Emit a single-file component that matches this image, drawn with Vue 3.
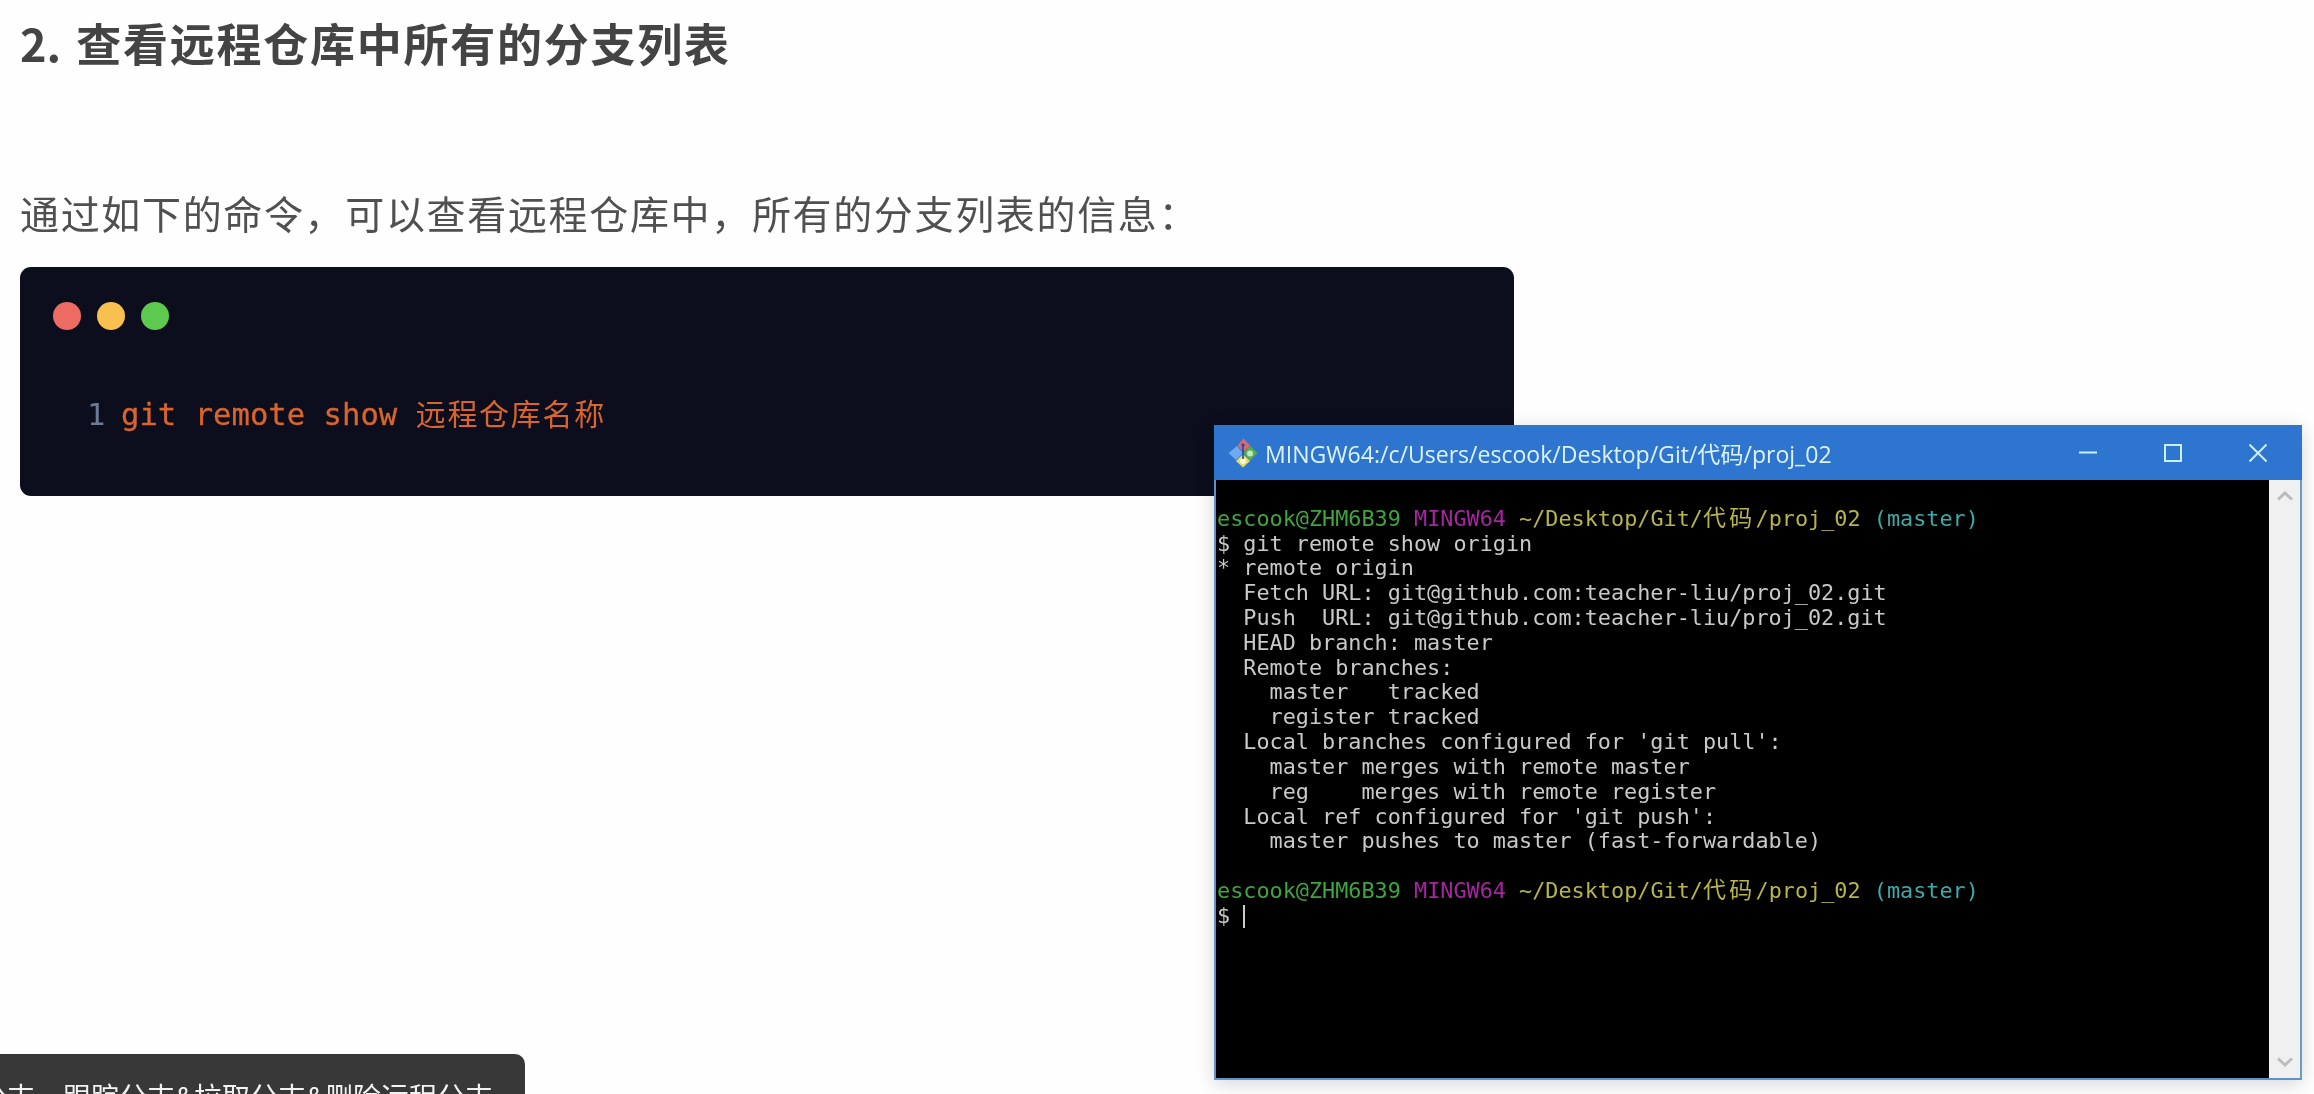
<script setup>
const rows = [
  [['g', 'escook@ZHM6B39'], ['w', ' '], ['m', 'MINGW64'], ['w', ' '], ['y', '~/Desktop/Git/'], ['yc', '代码'], ['y', '/proj_02'], ['w', ' '], ['c', '(master)']],
  [['w', '$ git remote show origin']],
  [['w', '* remote origin']],
  [['w', '  Fetch URL: git@github.com:teacher-liu/proj_02.git']],
  [['w', '  Push  URL: git@github.com:teacher-liu/proj_02.git']],
  [['w', '  HEAD branch: master']],
  [['w', '  Remote branches:']],
  [['w', '    master   tracked']],
  [['w', '    register tracked']],
  [['w', "  Local branches configured for 'git pull':"]],
  [['w', '    master merges with remote master']],
  [['w', '    reg    merges with remote register']],
  [['w', "  Local ref configured for 'git push':"]],
  [['w', '    master pushes to master (fast-forwardable)']],
  [['w', ' ']],
  [['g', 'escook@ZHM6B39'], ['w', ' '], ['m', 'MINGW64'], ['w', ' '], ['y', '~/Desktop/Git/'], ['yc', '代码'], ['y', '/proj_02'], ['w', ' '], ['c', '(master)']],
  [['w', '$ '], ['cursor', '']],
]
</script>

<template>
  <div class="page">
    <h2 class="heading"><span class="latin">2.</span> 查看远程仓库中所有的分支列表</h2>
    <p class="intro">通过如下的命令，可以查看远程仓库中，所有的分支列表的信息：</p>
    <div class="code">
      <div class="dots">
        <span class="dot red"></span>
        <span class="dot yellow"></span>
        <span class="dot green"></span>
      </div>
      <div class="code-line">
        <span class="num">1</span>
        <span class="cmd">git remote show <span class="cmd-cjk">远程仓库名称</span></span>
      </div>
    </div>

    <section class="window">
      <header class="titlebar">
        <svg class="logo" viewBox="0 0 30 30" aria-hidden="true">
          <path d="M15.5 0.5 L22 7.5 L15.5 14 L9.5 7.5 Z" fill="#d46a78" />
          <path d="M9 8 L15 15 L8 22 L0.5 15 Z" fill="#6fa9f2" />
          <path d="M22 8 L29.5 15 L22 22.5 L15.5 15 Z" fill="#58b04a" />
          <path d="M15 16 L22 23 L15 29.5 L8 23 Z" fill="#e6dc62" />
          <circle cx="22" cy="15.5" r="3" fill="#bfe6c8" />
          <circle cx="15" cy="23" r="3" fill="#f7f6d8" />
          <path d="M15 7 V21" stroke="#1f4f86" stroke-width="1.6" fill="none" />
          <circle cx="15" cy="7" r="1.6" fill="#1f4f86" />
        </svg>
        <span class="title">MINGW64:/c/Users/escook/Desktop/Git/代码/proj_02</span>
        <div class="controls">
          <svg class="ctl" viewBox="0 0 18 18" aria-hidden="true"><path d="M0 8.5 H18" /></svg>
          <svg class="ctl" viewBox="0 0 18 18" aria-hidden="true"><rect x="1" y="1" width="16" height="16" /></svg>
          <svg class="ctl" viewBox="0 0 18 18" aria-hidden="true"><path d="M0.5 0.5 L17.5 17.5 M17.5 0.5 L0.5 17.5" /></svg>
        </div>
      </header>
      <div class="body">
        <div class="term">
          <div v-for="(row, i) in rows" :key="i" class="row">
            <span v-for="(seg, j) in row" :key="j" :class="seg[0]">{{ seg[1] }}</span>
          </div>
        </div>
        <div class="scroll">
          <svg class="chev" viewBox="0 0 16 10" aria-hidden="true"><path d="M1 8.5 L8 2 L15 8.5" /></svg>
          <svg class="chev" viewBox="0 0 16 10" aria-hidden="true"><path d="M1 1.5 L8 8 L15 1.5" /></svg>
        </div>
      </div>
    </section>

    <div class="toast"><span class="toast-text">分支、跟踪分支&amp;拉取分支&amp;删除远程分支</span></div>
  </div>
</template>

<style scoped>
.page {
  position: relative;
  width: 2314px;
  height: 1094px;
  overflow: hidden;
  background: #fefefe;
  padding: 16px 0 0 20px;
  box-sizing: border-box;
  font-family: "Noto Sans CJK SC", "Noto Sans", sans-serif;
  filter: blur(0.45px);
}
.heading {
  margin: 0;
  font-size: 45px;
  line-height: 54px;
  font-weight: 700;
  letter-spacing: 1.75px;
  color: #444;
  white-space: nowrap;
}
.latin {
  letter-spacing: 0;
  margin-right: 3px;
}
.intro {
  margin: 116px 0 0;
  font-size: 39px;
  line-height: 52px;
  font-weight: 400;
  letter-spacing: 1.66px;
  color: #505050;
}
.code {
  margin-top: 29px;
  width: 1494px;
  height: 229px;
  background: #0c0e1d;
  border-radius: 11px;
  box-sizing: border-box;
  padding: 35px 0 0 33px;
}
.dots {
  display: flex;
  gap: 16px;
}
.dot {
  width: 28px;
  height: 28px;
  border-radius: 50%;
}
.red { background: #ee6b64; }
.yellow { background: #f8c04f; }
.green { background: #5dc94f; }
.code-line {
  display: flex;
  align-items: baseline;
  margin: 62px 0 0 34px;
  font-family: "DejaVu Sans Mono", "Noto Sans CJK SC", monospace;
  font-size: 30.6px;
  line-height: 40px;
}
.num {
  color: #6c7a94;
  width: 34px;
}
.cmd {
  color: #d9652c;
  white-space: pre;
  -webkit-text-stroke: 0.3px #d9652c;
}
.cmd-cjk {
  font-family: "Noto Sans CJK SC", sans-serif;
  font-size: 30px;
  letter-spacing: 1.7px;
  -webkit-text-stroke: 0;
}
.window {
  position: absolute;
  left: 1214px;
  top: 425px;
  width: 1088px;
  height: 655px;
  display: flex;
  flex-direction: column;
  border: 2px solid #5f92cb;
  border-top: none;
  border-right-color: #6b9fc2;
  box-sizing: border-box;
  background: #000;
  box-shadow: 0 4px 18px rgba(0, 0, 0, 0.16);
}
.titlebar {
  height: 55px;
  flex: none;
  margin: 0 -2px 0 -2px;
  background: #2e75d0;
  display: flex;
  align-items: center;
  padding-left: 14px;
  color: #ddf3fa;
}
.logo {
  width: 30px;
  height: 30px;
  flex: none;
}
.title {
  margin-left: 7px;
  font-family: "Open Sans", "Noto Sans CJK SC", sans-serif;
  font-size: 23.05px;
  white-space: nowrap;
}
.controls {
  margin-left: auto;
  display: flex;
  gap: 67px;
  padding-right: 35px;
}
.ctl {
  width: 18px;
  height: 18px;
  fill: none;
  stroke: #c9f1f2;
  stroke-width: 2;
}
.body {
  flex: 1;
  display: flex;
  min-height: 0;
}
.term {
  flex: 1;
  padding: 26.7px 0 0 1px;
  font-family: "DejaVu Sans Mono", "Noto Sans CJK SC", monospace;
  font-size: 21.82px;
  line-height: 24.83px;
  white-space: pre;
  color: #c9c9c9;
  overflow: hidden;
}
.row {
  height: 24.83px;
}
.g { color: #3ea63e; }
.m { color: #a625a0; }
.y, .yc { color: #b7b54a; }
.yc {
  font-family: "Noto Sans CJK SC", sans-serif;
  font-size: 23px;
  line-height: 0;
  letter-spacing: 3.3px;
}
.c { color: #3fa8a8; }
.cursor {
  display: inline-block;
  width: 1.5px;
  height: 23px;
  background: #c9c9c9;
  vertical-align: -5px;
}
.scroll {
  width: 31px;
  flex: none;
  background: #f0f0f0;
  display: flex;
  flex-direction: column;
  justify-content: space-between;
  align-items: center;
  padding: 11px 0 11px;
  box-sizing: border-box;
}
.chev {
  width: 16px;
  height: 10px;
  fill: none;
  stroke: #bcbcbc;
  stroke-width: 3;
}
.toast {
  position: absolute;
  left: 0;
  top: 1054px;
  width: 525px;
  height: 40px;
  overflow: hidden;
  background: #383838;
  border-top-right-radius: 10px;
}
.toast-text {
  position: absolute;
  left: -21px;
  top: 22px;
  font-size: 28px;
  line-height: 40px;
  color: #f2f2f2;
  white-space: nowrap;
}
</style>

<style>
html, body {
  margin: 0;
  background: #fff;
}
</style>
